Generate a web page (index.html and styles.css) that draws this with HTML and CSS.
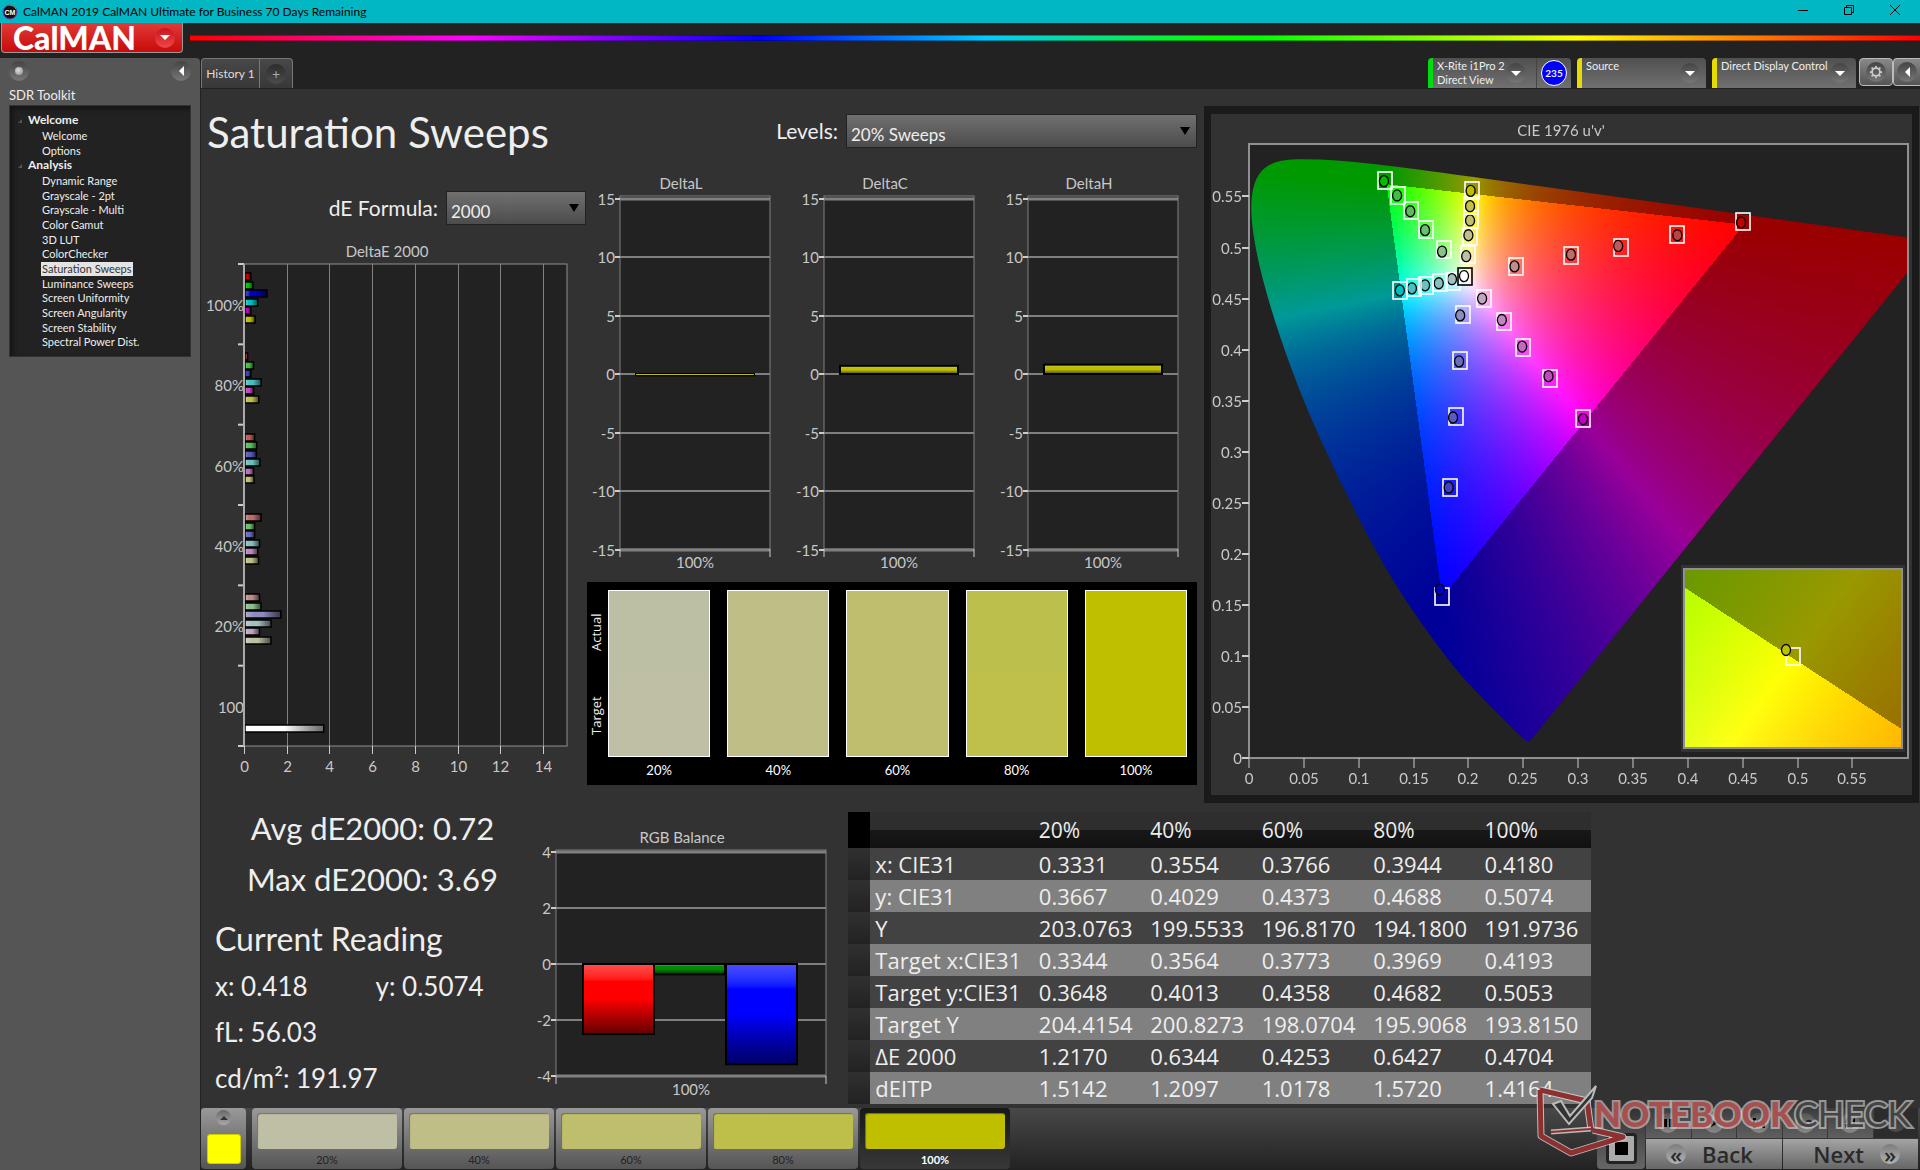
FILE: index.html
```html
<!DOCTYPE html>
<html lang="en">
<head>
    <meta charset="utf-8">
    <title>CalMAN 2019</title>
    <link rel="stylesheet" href="styles.css">
</head>
<body>
    <header class="title-bar">
        <svg class="app-icon" viewBox="0 0 16 16" width="16" height="16">
            <circle cx="8" cy="8" r="7" fill="#111" stroke="#7a3cc8" stroke-width="1"/>
            <path d="M2 4a7 7 0 0 1 6-3" fill="none" stroke="#e33" stroke-width="1"/>
            <path d="M8 1a7 7 0 0 1 6 4" fill="none" stroke="#3c3" stroke-width="1"/>
            <text x="8" y="11" text-anchor="middle">CM</text>
        </svg>
        <span class="title-text">CalMAN 2019 CalMAN Ultimate for Business 70 Days Remaining</span>
        <div class="win-buttons">
            <button aria-label="Minimize"><svg width="12" height="12" viewBox="0 0 12 12"><path d="M1 6.500h10"/></svg></button>
            <button aria-label="Restore"><svg width="12" height="12" viewBox="0 0 12 12"><path d="M1.500 3.500h7v7h-7zM3.500 3.500v-2h7v7h-2"/></svg></button>
            <button aria-label="Close"><svg width="12" height="12" viewBox="0 0 12 12"><path d="M1 1l10 10M11 1L1 11"/></svg></button>
        </div>
    </header>

    <div class="brand-row">
        <button class="brand">CalMAN <span class="round red"><i class="down"></i></span></button>
        <div class="rainbow"></div>
    </div>

    <div class="shell">
        <aside class="sidebar">
            <div class="side-tools">
                <button class="round" aria-label="Pin"><i class="dot"></i></button>
                <button class="round" aria-label="Collapse"><i class="left"></i></button>
            </div>
            <h2>SDR Toolkit</h2>
            <nav class="tree">
                <h3>Welcome</h3>
                <ul class="short">
                    <li><a href="#">Welcome</a></li>
                    <li><a href="#">Options</a></li>
                </ul>
                <h3>Analysis</h3>
                <ul class="long">
                    <li><a href="#">Dynamic Range</a></li>
                    <li><a href="#">Grayscale - 2pt</a></li>
                    <li><a href="#">Grayscale - Multi</a></li>
                    <li><a href="#">Color Gamut</a></li>
                    <li><a href="#">3D LUT</a></li>
                    <li><a href="#">ColorChecker</a></li>
                    <li><a href="#" class="current">Saturation Sweeps</a></li>
                    <li><a href="#">Luminance Sweeps</a></li>
                    <li><a href="#">Screen Uniformity</a></li>
                    <li><a href="#">Screen Angularity</a></li>
                    <li><a href="#">Screen Stability</a></li>
                    <li><a href="#">Spectral Power Dist.</a></li>
                </ul>
            </nav>
        </aside>

        <div class="content">
            <div class="tab-row">
                <div class="tabs">
                    <button>History 1</button>
                    <button aria-label="Add history"><span class="round faint">+</span></button>
                </div>
                <div class="devices">
                    <div class="device meter">
                        <button>X-Rite i1Pro 2<br>Direct View <span class="round"><i class="down"></i></span></button>
                        <button class="count" aria-label="Level"><b>235</b></button>
                    </div>
                    <div class="device source"><button>Source <span class="round"><i class="down"></i></span></button></div>
                    <div class="device display"><button>Direct Display Control <span class="round"><i class="down"></i></span></button></div>
                    <div class="tools">
                        <button aria-label="Settings"><span class="round"><svg viewBox="0 0 16 16" width="14" height="14"><circle cx="8" cy="8" r="4.500" fill="none" stroke="#ccc" stroke-width="2"/><path d="M8 1v2M8 13v2M1 8h2M13 8h2M3 3l1.500 1.500M11.500 11.500l1.500 1.500M13 3l-1.500 1.500M4.500 11.500l-1.500 1.500" stroke="#ccc" stroke-width="2"/></svg></span></button>
                        <button aria-label="Hide devices"><span class="round"><i class="left"></i></span></button>
                    </div>
                </div>
            </div>

            <main class="workspace">
                <section class="upper">
                    <div class="col-de">
                        <h1>Saturation Sweeps</h1>
                        <div class="field formula">
                            <label for="formula">dE Formula:</label>
                            <div class="select"><select id="formula"><option>2000</option></select></div>
                        </div>
                        <svg id="deltaE" class="chart" viewBox="0 0 385 565"></svg>
                    </div>
                    <div class="col-delta">
                        <div class="field levels">
                            <label for="levels">Levels:</label>
                            <div class="select"><select id="levels"><option>20% Sweeps</option></select></div>
                        </div>
                        <div class="deltas">
                            <svg id="deltaL" class="chart" viewBox="0 0 204 404"></svg>
                            <svg id="deltaC" class="chart" viewBox="0 0 204 404"></svg>
                            <svg id="deltaH" class="chart" viewBox="0 0 204 404"></svg>
                        </div>
                        <div class="compare">
                            <div class="side-labels"><span>Actual</span><span>Target</span></div>
                            <figure><div class="patch y20"></div><figcaption>20%</figcaption></figure>
                            <figure><div class="patch y40"></div><figcaption>40%</figcaption></figure>
                            <figure><div class="patch y60"></div><figcaption>60%</figcaption></figure>
                            <figure><div class="patch y80"></div><figcaption>80%</figcaption></figure>
                            <figure><div class="patch y100"></div><figcaption>100%</figcaption></figure>
                        </div>
                    </div>
                    <div class="col-cie">
                        <div class="cie">
                            <canvas id="cieFill" width="701" height="681"></canvas>
                            <svg id="cie" class="chart" viewBox="0 0 701 681"></svg>
                        </div>
                    </div>
                </section>

                <section class="lower">
                    <div class="stats">
                        <p class="big">Avg dE2000: 0.72</p>
                        <p class="big">Max dE2000: 3.69</p>
                        <h2>Current Reading</h2>
                        <p class="pair"><span>x: 0.418</span><span>y: 0.5074</span></p>
                        <p>fL: 56.03</p>
                        <p>cd/m²: 191.97</p>
                    </div>
                    <svg id="rgb" class="chart" viewBox="0 0 312 305"></svg>
                    <table>
                        <thead>
                            <tr><th class="grip"></th><th></th><th>20%</th><th>40%</th><th>60%</th><th>80%</th><th>100%</th></tr>
                        </thead>
                        <tbody>
                            <tr><td class="grip"></td><th>x: CIE31</th><td>0.3331</td><td>0.3554</td><td>0.3766</td><td>0.3944</td><td>0.4180</td></tr>
                            <tr><td class="grip"></td><th>y: CIE31</th><td>0.3667</td><td>0.4029</td><td>0.4373</td><td>0.4688</td><td>0.5074</td></tr>
                            <tr><td class="grip"></td><th>Y</th><td>203.0763</td><td>199.5533</td><td>196.8170</td><td>194.1800</td><td>191.9736</td></tr>
                            <tr><td class="grip"></td><th>Target x:CIE31</th><td>0.3344</td><td>0.3564</td><td>0.3773</td><td>0.3969</td><td>0.4193</td></tr>
                            <tr><td class="grip"></td><th>Target y:CIE31</th><td>0.3648</td><td>0.4013</td><td>0.4358</td><td>0.4682</td><td>0.5053</td></tr>
                            <tr><td class="grip"></td><th>Target Y</th><td>204.4154</td><td>200.8273</td><td>198.0704</td><td>195.9068</td><td>193.8150</td></tr>
                            <tr><td class="grip"></td><th>ΔE 2000</th><td>1.2170</td><td>0.6344</td><td>0.4253</td><td>0.6427</td><td>0.4704</td></tr>
                            <tr><td class="grip"></td><th>dEITP</th><td>1.5142</td><td>1.2097</td><td>1.0178</td><td>1.5720</td><td>1.4164</td></tr>
                        </tbody>
                    </table>
                </section>
            </main>

            <footer class="dock">
                <button class="pick" aria-label="Current patch"><span class="round small"><i class="up"></i></span><span class="chip"></span></button>
                <div class="levels-tabs">
                    <button><span class="swatch y20"></span>20%</button>
                    <button><span class="swatch y40"></span>40%</button>
                    <button><span class="swatch y60"></span>60%</button>
                    <button><span class="swatch y80"></span>80%</button>
                    <button class="active"><span class="swatch y100"></span>100%</button>
                </div>
                <div class="transport">
                    <button class="stop" aria-label="Stop"><i class="up"></i><span class="square"></span></button>
                    <div class="keys">
                        <button aria-label="Pause"><span class="round light"><svg width="8" height="8" viewBox="0 0 8 8"><path d="M0 0h3v8H0zM5 0h3v8H5z"/></svg></span></button>
                        <button aria-label="Play"><span class="round light"><svg width="8" height="8" viewBox="0 0 8 8"><path d="M1 0l7 4-7 4z"/></svg></span></button>
                        <button aria-label="Step"><span class="round light"><svg width="12" height="10" viewBox="0 0 12 10"><path d="M0 0h3v2H2v6h1v2H0zM12 0H9v2h1v6H9v2h3zM4 3h1v4H4zM7 3h1v4H7z"/></svg></span></button>
                        <button aria-label="Loop"><span class="round light"><svg width="14" height="8" viewBox="0 0 14 8"><path d="M7 4C5 1 1 0 1 4s4 3 6 0 6-3 6 0-4 3-6 0z" fill="none" stroke="#222" stroke-width="2"/></svg></span></button>
                        <button aria-label="Refresh"><span class="round light"><svg width="12" height="12" viewBox="0 0 12 12"><path d="M2 6a4 4 0 0 1 7-3M10 6a4 4 0 0 1-7 3" fill="none" stroke="#222" stroke-width="2"/><path d="M11 1v4H7zM1 11V7h4z"/></svg></span></button>
                        <button class="off" aria-label="Record"><span class="round faint"></span></button>
                        <button class="wide"><span class="round light">«</span>Back</button>
                        <button class="wide next">Next<span class="round light">»</span></button>
                    </div>
                </div>
                <svg class="watermark" viewBox="0 0 382 76" width="382" height="76">
                    <g fill="none" stroke-linejoin="round">
                        <path class="halo" d="M5 6L52 17 56 46 M5 6L6 52 36 69 88 53 58 46"/>
                        <path class="mark" d="M5 6L52 17 56 46 M5 6L6 52 36 69 88 53 58 46"/>
                        <path class="halo thin" d="M16 48L56 45"/>
                        <path class="mark thin" d="M16 48L56 45"/>
                    </g>
                    <path class="tick" d="M18 20l8-3 9 15L61 2l-4 12-23 26z"/>
                    <text y="43"><tspan class="wm-red" x="59">NOTEBOOK</tspan><tspan class="wm-dark">CHECK</tspan></text>
                </svg>
            </footer>
        </div>
    </div>
    <script src="script.js"></script>
</body>
</html>
```
FILE: styles.css
```css
* {
    box-sizing: border-box;
    margin: 0;
    padding: 0;
}

body {
    min-height: 100vh;
    display: flex;
    flex-direction: column;
    background: #222;
    color: #eee;
    font-family: Lato, "Open Sans", sans-serif;
    font-size: 12px;
    overflow-x: hidden;
}

button {
    border: 0;
    background: none;
    color: inherit;
    font: inherit;
}

a {
    color: inherit;
    text-decoration: none;
}

/* title bar */
.title-bar {
    height: 23px;
    display: flex;
    align-items: center;
    background: #00b7c3;
    color: #000;
    padding-left: 2px;
}

.app-icon text {
    font: bold 7px "Liberation Sans", sans-serif;
    fill: #fff;
}

.title-text {
    margin-left: 5px;
    font-family: Lato, sans-serif;
    font-size: 12px;
}

.win-buttons {
    margin-left: auto;
    display: flex;
    padding-right: 2px;
}

.win-buttons button {
    width: 46px;
    height: 20px;
}

.win-buttons svg {
    fill: none;
    stroke: #000;
    stroke-width: 1;
}

/* round icon holders and arrows */
.round {
    width: 20px;
    height: 20px;
    border-radius: 50%;
    display: inline-flex;
    align-items: center;
    justify-content: center;
    background: linear-gradient(#444, #777);
}

.round.red {
    background: linear-gradient(#c8141c, #f04848);
}

.round.faint {
    background: linear-gradient(#2c2c2c, #4c4c4c);
    color: #aaa;
    font-size: 14px;
}

.round.small {
    width: 15px;
    height: 15px;
    background: linear-gradient(#666, #aaa);
}

.round.light {
    background: linear-gradient(#7c7c7c, #b4b4b4);
    color: #2a2a2a;
    line-height: 16px;
}

.down, .left, .up {
    border: 5px solid transparent;
}

.down {
    border-top-color: #fff;
    border-bottom: 0;
}

.left {
    border-right-color: #fff;
    border-left: 0;
}

.up {
    border: 4px solid transparent;
    border-bottom-color: #333;
    border-top: 0;
}

.dot {
    width: 8px;
    height: 8px;
    border-radius: 50%;
    background: radial-gradient(circle at 40% 40%, #ddd, #888);
}

/* brand */
.brand-row {
    height: 35px;
    display: flex;
    gap: 7px;
    padding-left: 1px;
}

.brand {
    width: 182px;
    height: 30px;
    display: flex;
    align-items: center;
    justify-content: space-between;
    padding: 0 7px 0 11px;
    border: 1px solid #999;
    border-top: 0;
    border-radius: 0 0 4px 4px;
    background: linear-gradient(#e03a38, #c80a0a);
    color: #fff;
    font-size: 32px;
    font-weight: 900;
    line-height: 28px;
}

.rainbow {
    flex: 1;
    height: 6px;
    margin-top: 12px;
    border: 1px solid rgba(0, 0, 0, .35);
    border-width: 1px 0;
    background: linear-gradient(90deg, #f00 0%, #f0f 16%, #00f 33%, #0cf 46%, #0f0 59%, #0f0 62%, #ff0 80%, #f00 100%);
}

/* shell */
.shell {
    flex: 1;
    display: flex;
}

.sidebar {
    width: 200px;
    padding: 3px 9px;
    background: #555;
    border-radius: 0 4px 0 0;
}

.side-tools {
    display: flex;
    justify-content: space-between;
}

.sidebar h2 {
    margin-top: 4px;
    font-size: 13px;
    font-weight: normal;
    line-height: 20px;
}

.tree {
    padding: 7px 0 6px 18px;
    border: 1px solid #333;
    background: #222;
    font-size: 11px;
    line-height: 14px;
    box-shadow: inset 3px 3px 5px #151515;
}

.tree h3 {
    font-size: 12px;
    line-height: 14px;
    position: relative;
}

.tree h3::before {
    content: "";
    position: absolute;
    left: -10px;
    top: 6px;
    border: 2px solid transparent;
    border-right-color: #555;
    border-bottom-color: #555;
}

.tree ul {
    display: grid;
    grid-auto-rows: 1fr;
    list-style: none;
    padding-left: 13px;
    margin-top: 2px;
}

.tree .short {
    height: 29px;
}

.tree .long {
    height: 176px;
}

.tree a {
    display: inline-block;
    padding: 0 1px;
}

.tree .current {
    background: #e4e4e4;
    color: #333;
}

.content {
    flex: 1;
    min-width: 0;
    display: flex;
    flex-direction: column;
    border-left: 1px solid #222;
}

/* tabs and devices */
.tab-row {
    height: 31px;
    display: flex;
    justify-content: space-between;
}

.tabs {
    display: flex;
    height: 30px;
    border: 1px solid #777;
    border-bottom: 0;
    border-radius: 4px 4px 0 0;
    background: linear-gradient(#484848, #383838);
}

.tabs button {
    width: 32px;
    color: #ddd;
}

.tabs button:first-child {
    width: 58px;
    border-right: 1px solid #777;
}

.devices {
    display: flex;
    gap: 6px;
}

.device {
    display: flex;
    height: 30px;
    width: 129px;
    border-left: 5px solid #e6dc00;
    border-radius: 4px 4px 0 0;
    background: linear-gradient(#505050, #707070);
}

.device.meter {
    width: 143px;
    border-left-color: #00dc10;
}

.device.display {
    width: 144px;
}

.device button:first-child {
    flex: 1;
    padding: 0 6px 0 4px;
    text-align: left;
    font-size: 11px;
    line-height: 14px;
    white-space: nowrap;
    position: relative;
}

.device .round {
    position: absolute;
    right: 10px;
    top: 5px;
}

.device.source button, .device.display button {
    padding-bottom: 14px;
}

.device.source .round, .device.display .round {
    right: 6px;
}

.device .count {
    width: 35px;
    border-left: 1px solid #444;
}

.count b {
    display: block;
    width: 26px;
    height: 26px;
    margin: 0 auto;
    border: 1px solid #fff;
    border-radius: 50%;
    background: #00f;
    font-size: 10px;
    line-height: 24px;
}

.tools {
    display: flex;
    margin-left: -3px;
}

.tools button {
    width: 34px;
    height: 28px;
    border: 1px solid #bbb;
    border-radius: 4px;
    background: linear-gradient(#888, #555);
}

.tools button + button {
    width: 27px;
    border-right: 0;
    border-radius: 4px 0 0 4px;
}

.tools .round {
    vertical-align: middle;
}

/* workspace */
.workspace {
    flex: 1;
    background: #323232;
}

.upper {
    display: grid;
    grid-template-columns: minmax(0, 385fr) minmax(0, 614fr) minmax(0, 720fr);
}

.chart {
    display: block;
    width: 100%;
    height: auto;
}

.chart text {
    font-size: 15px;
    fill: #c8c8c8;
}

h1 {
    padding: 15px 0 0 6px;
    font-size: 42px;
    font-weight: normal;
    line-height: 56px;
    white-space: nowrap;
}

.field {
    display: flex;
    justify-content: flex-end;
    align-items: center;
    gap: 8px;
    font-size: 21px;
    line-height: 34px;
}

.formula {
    margin-top: 31px;
}

.levels {
    padding: 25px 3px 0 0;
}

.select {
    position: relative;
    width: 140px;
}

.levels .select {
    width: 351px;
}

.select::after {
    content: "";
    position: absolute;
    right: 7px;
    top: 13px;
    border: 5px solid transparent;
    border-top: 8px solid #000;
    border-bottom: 0;
}

.select select {
    appearance: none;
    display: block;
    width: 100%;
    height: 34px;
    padding: 6px 5px 0 4px;
    border: 1px solid #222;
    border-radius: 0;
    background: linear-gradient(#707070, #4c4c4c);
    color: #eee;
    font-family: inherit;
    font-size: 17px;
}

.deltas {
    display: grid;
    grid-template-columns: repeat(3, 1fr);
    margin: 22px 2px 8px 0;
}

.compare {
    display: flex;
    gap: 17px;
    height: 203px;
    margin: 0 3px 0 1px;
    padding: 8px 10px 0 0;
    background: #000;
}

.side-labels {
    display: flex;
    flex-direction: column-reverse;
    width: 21px;
    height: 167px;
    margin-right: -17px;
    transform: rotate(180deg);
}

.side-labels span {
    flex: 1;
    padding-right: 2px;
    writing-mode: vertical-rl;
    text-align: center;
    font-family: "Open Sans", sans-serif;
    font-size: 13px;
    line-height: 14px;
}

.compare figure {
    flex: 1;
    text-align: center;
}

.patch {
    height: 167px;
    border: 1px solid #fff;
}

figcaption {
    font-size: 13px;
    line-height: 26px;
    color: #fff;
}

.y20 { background: #bfbfa6; }
.y40 { background: #bfbe87; }
.y60 { background: #bfbe6c; }
.y80 { background: #bebf4a; }
.y100 { background: #bfbf00; }
.patch.y20 { background: linear-gradient(#bcbfa4 50%, #bfbfa6 50%); }
.patch.y80 { background: linear-gradient(#bcbf4b 50%, #bfc04a 50%); }

.col-cie {
    padding: 17px 1px 0 4px;
}

.cie {
    display: grid;
    border: 7px solid #1a1a1a;
    border-width: 8px 7px;
}

.cie > * {
    grid-area: 1 / 1;
    width: 100%;
}

.lower {
    display: grid;
    grid-template-columns: minmax(0, 335fr) minmax(0, 312fr) minmax(0, 743fr) minmax(0, 329fr);
    align-items: start;
}

.stats {
    padding: 0 0 0 14px;
    font-size: 26px;
    line-height: 46px;
    white-space: nowrap;
}

.stats .big {
    font-size: 31px;
    line-height: 51px;
    text-align: center;
    padding-right: 6px;
}

.stats h2 {
    font-size: 32px;
    font-weight: normal;
    line-height: 48px;
    margin-top: 10px;
}

.stats .pair {
    display: flex;
    gap: 68px;
}

table {
    width: 100%;
    margin-top: 9px;
    border-collapse: collapse;
    table-layout: fixed;
    font-family: "Open Sans", "Noto Sans", sans-serif;
    font-size: 22px;
}

th, td {
    width: 15%;
    height: 32px;
    padding-left: 5px;
    text-align: left;
    font-weight: normal;
    line-height: 28px;
    white-space: nowrap;
}

th:nth-child(2) {
    width: 22%;
}

th.grip, td.grip {
    width: 20px;
    padding: 0;
    background: linear-gradient(#303030, #222);
}

thead th {
    height: 36px;
    font-size: 21px;
    background: linear-gradient(#2e2e2e 50%, #181818 50%, #111);
}

thead th.grip {
    background: #000;
}

tbody tr {
    background: #424242;
}

tbody tr:nth-child(even) {
    background: #808080;
}

/* dock */
.dock {
    height: 62px;
    display: flex;
    position: relative;
    background: linear-gradient(#484848, #222);
}

.pick {
    width: 45px;
    height: 61px;
    margin-right: 6px;
    display: flex;
    flex-direction: column;
    align-items: center;
    gap: 9px;
    padding-top: 2px;
    border-radius: 4px;
    background: linear-gradient(#999, #555);
}

.chip {
    width: 34px;
    height: 30px;
    border: 1px solid #cc0;
    border-radius: 3px;
    background: #ff0;
}

.levels-tabs {
    display: flex;
    gap: 2px;
}

.levels-tabs button {
    width: 150px;
    height: 61px;
    display: flex;
    flex-direction: column;
    align-items: center;
    padding: 5px;
    border-radius: 4px;
    background: linear-gradient(#999, #555);
    color: #222;
    font-size: 11px;
    line-height: 21px;
}

.levels-tabs .active {
    background: linear-gradient(#181818, #383838);
    color: #fff;
    font-weight: bold;
}

.swatch {
    width: 140px;
    height: 36px;
    flex: none;
    border-radius: 3px;
    box-shadow: inset 1px 1px 1px rgba(0, 0, 0, .4);
}

.transport {
    display: flex;
    gap: 1px;
    margin-left: auto;
    padding-right: 2px;
}

.stop {
    width: 48px;
    height: 61px;
    display: flex;
    flex-direction: column;
    align-items: center;
    justify-content: space-between;
    padding: 8px 0 5px;
    border-radius: 4px;
    background: linear-gradient(#333, #666);
}

.stop .square {
    width: 31px;
    height: 31px;
    border: 3px solid #222;
    border-radius: 4px;
    outline: 6px solid #aaa;
    outline-offset: -9px;
    background: #000;
}

.keys {
    display: grid;
    width: 272px;
    grid-template-columns: repeat(6, 1fr);
    grid-template-rows: 30px 30px;
    gap: 1px;
}

.keys button {
    background: linear-gradient(#3c3c3c, #606060);
}

.keys button:not(.wide) .light {
    background: linear-gradient(#555, #888);
}

.keys .off {
    background: #2c2c2c;
}

.keys .wide {
    grid-column: span 3;
    display: flex;
    align-items: center;
    gap: 16px;
    padding-left: 20px;
    background: linear-gradient(#a4a4a4, #666);
    color: #2a2a2a;
    font-family: "Open Sans", sans-serif;
    font-size: 22px;
    font-weight: 600;
}

.keys .next {
    justify-content: flex-end;
    padding: 0 18px 0 0;
}

.watermark {
    position: absolute;
    right: 3px;
    bottom: 10px;
    pointer-events: none;
}

.halo {
    stroke: rgba(220, 220, 220, .8);
    stroke-width: 7;
}

.mark {
    stroke: #8c3030;
    stroke-width: 5;
}

.halo.thin {
    stroke-width: 5;
}

.mark.thin {
    stroke-width: 2;
}

.tick {
    fill: #333;
    stroke: #bbb;
    stroke-width: 2;
}

.watermark text {
    font-family: Lato, sans-serif;
    font-size: 35px;
    paint-order: stroke;
    stroke: rgba(220, 220, 220, .6);
    stroke-width: 4;
}

.wm-red {
    font-weight: 900;
    fill: #a85050;
}

.wm-dark {
    fill: #444;
}
```
FILE: script.js
```js
var NS = 'http://www.w3.org/2000/svg';

function add(parent, name, attrs, text) {
    var node = document.createElementNS(NS, name);
    for (var key in attrs) {
        node.setAttribute(key, attrs[key]);
    }
    if (text !== undefined) {
        node.textContent = text;
    }
    parent.appendChild(node);
    return node;
}

function line(svg, x1, y1, x2, y2, color, width) {
    add(svg, 'line', {x1: x1, y1: y1, x2: x2, y2: y2, stroke: color || '#808080', 'stroke-width': width || 1});
}

function label(svg, x, y, text, anchor) {
    add(svg, 'text', {x: x, y: y, 'text-anchor': anchor || 'middle'}, text);
}

// shade a bar from light to dark, across or down
var gradients = 0;
function shade(svg, color, down) {
    var id = svg.id + 'g' + (gradients++);
    var g = add(svg, 'linearGradient', {id: id, x1: 0, y1: 0, x2: down ? 0 : 1, y2: down ? 1 : 0});
    add(g, 'stop', {offset: 0, 'stop-color': 'color-mix(in srgb, ' + color + ' 70%, white)'});
    add(g, 'stop', {offset: 0.25, 'stop-color': color});
    add(g, 'stop', {offset: 0.5, 'stop-color': color});
    add(g, 'stop', {offset: 1, 'stop-color': 'color-mix(in srgb, ' + color + ' 40%, black)'});
    return 'url(#' + id + ')';
}

// colours of one sweep level: red, green, blue, cyan, magenta, yellow
function levelColors(one, two) {
    var h = 191;
    return [[h, one, one], [one, h, one], [one, one, h], [two, h, h], [h, two, h], [h, h, two]].map(function(c) {
        return 'rgb(' + c.join(',') + ')';
    });
}

var colors = {
    100: levelColors(0, 0),
    80: levelColors(66, 74),
    60: levelColors(90, 108),
    40: levelColors(108, 135),
    20: levelColors(140, 166)
};

function drawDeltaE() {
    var svg = document.getElementById('deltaE');
    var left = 43, right = 366, top = 39, bottom = 521;
    var step = (bottom - top) / 6;
    var groups = [
        ['100%', 100, [0.27, 0.37, 1.03, 0.6, 0.27, 0.4704]],
        ['80%', 80, [0.12, 0.4, 0.27, 0.76, 0.4, 0.6427]],
        ['60%', 60, [0.45, 0.55, 0.53, 0.7, 0.4, 0.4253]],
        ['40%', 40, [0.75, 0.45, 0.45, 0.68, 0.6, 0.6344]],
        ['20%', 20, [0.68, 0.75, 1.68, 1.22, 0.68, 1.217]],
        ['100', 0, []]
    ];
    label(svg, 186, 32, 'DeltaE 2000');
    add(svg, 'rect', {x: left, y: top, width: right - left, height: bottom - top, fill: '#222', stroke: '#909090', 'stroke-width': 1});
    for (var v = 0; v <= 14; v += 2) {
        var x = Math.round(left + v * 21.35) + 0.5;
        line(svg, x, top, x, bottom);
        line(svg, x, bottom, x, bottom + 8, '#ccc');
        label(svg, x, bottom + 26, v);
    }
    groups.forEach(function(group, i) {
        var y = top + i * step;
        line(svg, left - 6, y, left, y, '#ccc', 2);
        label(svg, left, y + 47, group[0], 'end');
        group[2].forEach(function(value, j) {
            bar(y + 9 + j * 8.5, value, colors[group[1]][j]);
        });
    });
    bar(top + 5 * step + 59, 3.69, '#fff');
    line(svg, left - 6, bottom, left, bottom, '#ccc', 2);
    line(svg, left, top, left, bottom, '#aaa', 2);

    function bar(y, value, color) {
        add(svg, 'rect', {x: left + 1, y: Math.round(y), width: value * 21.35, height: 7, fill: shade(svg, color), stroke: '#000', 'stroke-width': 1.5});
    }
}

// vertical bar chart around a zero line
function drawBars(o) {
    var svg = document.getElementById(o.id);
    var unit = (o.y1 - o.y0) / (2 * o.max);
    var zero = Math.round((o.y0 + o.y1) / 2);
    label(svg, o.titleX, o.y0 - 9, o.title);
    add(svg, 'rect', {x: o.x0, y: o.y0 - 2, width: o.x1 - o.x0, height: o.y1 - o.y0 + 2, fill: '#222', stroke: '#808080', 'stroke-width': 1});
    for (var v = o.max; v >= -o.max; v -= o.step) {
        var y = Math.round(zero - v * unit);
        line(svg, o.x0, y, o.x1, y, '#808080', Math.abs(v) === o.max ? 3 : 2);
        line(svg, o.x0 - 5, y, o.x0, y, '#ccc', 2);
        label(svg, o.x0 - 5, y + 6, v, 'end');
    }
    line(svg, o.x0, o.y1, o.x0, o.y1 + 8, '#ccc');
    line(svg, o.x1, o.y1, o.x1, o.y1 + 8, '#ccc');
    label(svg, (o.x0 + o.x1) / 2, o.y1 + 19, '100%');
    o.bars.forEach(function(b) {
        add(svg, 'rect', {
            x: b[0], y: zero - Math.max(0, b[2]) * unit, width: b[1], height: Math.abs(b[2]) * unit,
            fill: shade(svg, b[3], true), stroke: '#000', 'stroke-width': 2
        });
        if (Math.abs(b[2]) * unit < 3) {
            line(svg, b[0], zero + 0.5, b[0] + b[1], zero + 0.5, b[3]);
        }
    });
}

// CIE 1976 chart: 1097px per u', 1021px per v'
var cx = 38, cy = 644;
var locus = [
    [.1741, .0050], [.1733, .0048], [.1714, .0051], [.1689, .0069], [.1644, .0109], [.1566, .0177], [.1440, .0297],
    [.1241, .0578], [.1096, .0868], [.0913, .1327], [.0687, .2007], [.0454, .2950], [.0235, .4127], [.0082, .5384],
    [.0039, .6548], [.0139, .7502], [.0389, .8120], [.0743, .8338], [.1142, .8262], [.1547, .8059], [.2296, .7543],
    [.3016, .6923], [.3731, .6245], [.4441, .5547], [.5125, .4866], [.5752, .4242], [.6270, .3725], [.6658, .3340],
    [.6915, .3083], [.7190, .2809], [.7347, .2653]
];

function paint(w, h, toXy) {
    var c = document.createElement('canvas');
    c.width = w;
    c.height = h;
    var ctx = c.getContext('2d');
    var img = ctx.createImageData(w, h);
    for (var j = 0; j < h; j++) {
        for (var i = 0; i < w; i++) {
            var p = toXy(i, j), x = p[0], y = p[1], z = 1 - x - y;
            var r = 3.2406 * x - 1.5372 * y - 0.4986 * z;
            var g = -0.9689 * x + 1.8758 * y + 0.0415 * z;
            var b = 0.0557 * x - 0.2040 * y + 1.0570 * z;
            // dim everything outside Rec.709
            var k = (r < 0 || g < 0 || b < 0) ? 153 : 255;
            var m = Math.max(r, g, b), n = (j * w + i) * 4;
            img.data[n] = Math.max(0, r) / m * k;
            img.data[n + 1] = Math.max(0, g) / m * k;
            img.data[n + 2] = Math.max(0, b) / m * k;
            img.data[n + 3] = 255;
        }
    }
    ctx.putImageData(img, 0, 0);
    return c;
}

function drawCie() {
    var ctx = document.getElementById('cieFill').getContext('2d');
    var svg = document.getElementById('cie');
    ctx.fillStyle = '#222';
    ctx.fillRect(cx, 30, 659, 614);

    ctx.save();
    ctx.beginPath();
    ctx.rect(cx, 30, 659, 614);
    ctx.clip();
    var pts = locus.map(function(p) {
        var d = -2 * p[0] + 12 * p[1] + 3;
        return [cx + 4 * p[0] / d * 1097, cy - 9 * p[1] / d * 1021];
    });
    ctx.beginPath();
    ctx.moveTo((pts[0][0] + pts[1][0]) / 2, pts[0][1]);
    for (var i = 1; i < pts.length - 1; i++) {
        ctx.quadraticCurveTo(pts[i][0], pts[i][1], (pts[i][0] + pts[i + 1][0]) / 2, (pts[i][1] + pts[i + 1][1]) / 2);
    }
    ctx.lineTo(pts[i][0], pts[i][1]);
    ctx.closePath();
    ctx.clip();
    ctx.drawImage(paint(701, 681, function(x, y) {
        var u = (x - cx) / 1097, v = (cy - y) / 1021;
        var d = 6 * u - 16 * v + 12;
        return [9 * u / d, 4 * v / d];
    }), 0, 0);
    ctx.restore();

    // magnified view round the last reading, in xy
    ctx.fillStyle = '#323232';
    ctx.fillRect(470, 451, 224, 187);
    ctx.drawImage(paint(218, 179, function(x, y) {
        return [.4193 + (x - 109) / 4380, .5053 - (y - 89) / 3600];
    }), 473, 455);

    label(svg, 350, 22, "CIE 1976 u'v'");
    add(svg, 'rect', {x: cx, y: 30, width: 659, height: 614, fill: 'none', stroke: '#909090', 'stroke-width': 2});
    for (i = 0; i < 12; i++) {
        var text = String(i * 5 / 100);
        var x = Math.round(cx + i * 54.85), y = Math.round(cy - i * 51.05);
        line(svg, x, cy, x, cy + 10, '#ccc', 1);
        label(svg, x, cy + 26, text);
        line(svg, cx - 7, y, cx, y, '#ccc', 2);
        label(svg, cx - 7, y + 6, text, 'end');
    }

    // [target u, v, actual u, v] in thousandths, 20% to 100%
    var points = [
        [[243, 480.5, 242, 481.5], [293.5, 492, 293.5, 493], [339.5, 500, 336.5, 501.5], [390.5, 512, 390.5, 512], [450.5, 525, 448.5, 524.5]],
        [[178, 497.5, 176, 496], [161.5, 517, 160.5, 517], [147.5, 535.5, 147, 535.5], [136, 550, 135, 551], [124, 565, 123, 565]],
        [[195, 433.5, 192.5, 433.5], [192.5, 388.5, 191.5, 388.5], [188.5, 333.5, 186, 333.5], [183, 264, 182, 265], [176, 158, 174, 165]],
        [[186, 466, 185, 469], [174, 465, 173, 465], [161.5, 462, 160.5, 463], [150, 460, 148.5, 460], [138, 457, 137.5, 458]],
        [[214, 450, 212.5, 450], [232, 427, 230.5, 429], [250, 402, 249, 403], [274.5, 371, 273, 374], [304.5, 332.5, 304.5, 332]],
        [[199.5, 492.5, 198, 491.5], [201.5, 510, 200, 512], [202.5, 526.5, 201.5, 526.5], [202.5, 540.5, 201.5, 540.5], [203, 555, 202, 555.5]]
    ];
    var levels = [20, 40, 60, 80, 100];
    points.forEach(function(hue, h) {
        hue.forEach(function(p, i) {
            mark(p, colors[levels[i]][h], '#fff');
        });
    });
    mark([197, 471, 196, 472], '#fff', '#000');

    function mark(p, fill, stroke) {
        target(cx + p[0] * 1.097, cy - p[1] * 1.021, stroke);
        actual(cx + p[2] * 1.097, cy - p[3] * 1.021, fill);
    }
    function target(x, y, stroke) {
        add(svg, 'rect', {x: Math.round(x) - 7, y: Math.round(y) - 9, width: 14, height: 17, fill: 'none', stroke: stroke, 'stroke-width': 1.6});
    }
    function actual(x, y, fill) {
        add(svg, 'ellipse', {cx: x, cy: y, rx: 4.5, ry: 5.5, fill: fill, stroke: '#000', 'stroke-width': 1.3});
    }
    target(582, 543, '#fff');
    actual(575, 536, '#bfbf00');
    add(svg, 'rect', {x: 473, y: 455, width: 218, height: 179, fill: 'none', stroke: '#909090', 'stroke-width': 2});
}

drawDeltaE();
[['L', -0.12], ['C', 0.7], ['H', 0.8]].forEach(function(d) {
    drawBars({
        id: 'delta' + d[0], title: 'Delta' + d[0], titleX: 95, x0: 34, x1: 184, y0: 28, y1: 379,
        max: 15, step: 5, bars: [[50, 118, d[1], '#bfbf00']]
    });
});
drawBars({
    id: 'rgb', title: 'RGB Balance', titleX: 146, x0: 20, x1: 290, y0: 49, y1: 273, max: 4, step: 2,
    bars: [[47, 71, -2.5, '#f00'], [118, 71, -0.37, '#008a00'], [190, 71, -3.58, '#00f']]
});
drawCie();
```
